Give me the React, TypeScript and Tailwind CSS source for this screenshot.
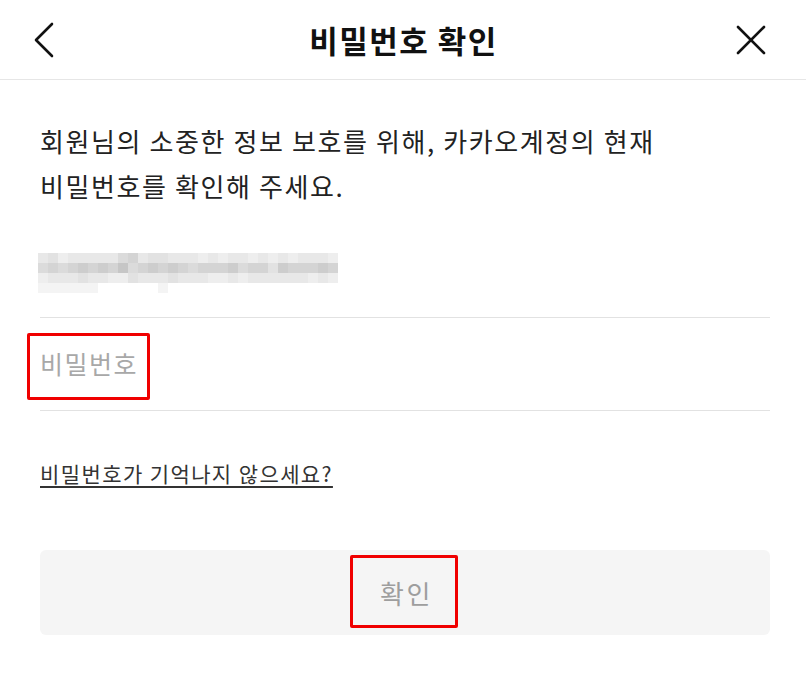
import React from "react";

// shade digits for the blurred e-mail mosaic (0 = white, 9 = darkest)
const mosaic: string[] = [
  "342333335634433323233232323332",
  "565676768567676566675664766676",
  "233343322433343332232333333232",
  "111111000000100000000000000000",
];

const shades = [
  "#ffffff",
  "#f4f4f4",
  "#eeeeee",
  "#e8e8e8",
  "#e2e2e2",
  "#dbdbdb",
  "#d4d4d4",
  "#cdcdcd",
  "#c6c6c6",
  "#bebebe",
];

const font = {
  fontFamily: '"Noto Sans CJK KR", "Noto Sans", sans-serif',
};

const BlurredEmail: React.FC = () => (
  <div className="flex flex-col">
    {mosaic.map((row, r) => (
      <div key={r} className="flex">
        {row.split("").map((d, c) => (
          <div
            key={c}
            className="h-[10px] w-[10px]"
            style={{ backgroundColor: shades[Number(d)] }}
          />
        ))}
      </div>
    ))}
  </div>
);

export default function App() {
  return (
    <div className="min-h-[682px] w-[806px] bg-white text-[#111]" style={font}>
      {/* === Header ======================================================= */}
      <header className="flex h-20 items-center justify-between border-b border-[#e6e6e6] pl-[33px] pr-[40px]">
        <button className="flex h-10 w-12 items-center justify-start">
          <svg width="22" height="36" viewBox="0 0 22 36" fill="none">
            <path
              d="M19 2 L3 18 L19 34"
              stroke="#111"
              strokeWidth="2.6"
              strokeLinecap="round"
              strokeLinejoin="round"
            />
          </svg>
        </button>
        <h1 className="text-[31px] font-bold leading-none tracking-[1.5px]">
          비밀번호 확인
        </h1>
        <button className="flex h-10 w-10 items-center justify-end">
          <svg width="30" height="30" viewBox="0 0 30 30" fill="none">
            <path
              d="M2 2 L28 28 M28 2 L2 28"
              stroke="#111"
              strokeWidth="2.6"
              strokeLinecap="round"
            />
          </svg>
        </button>
      </header>

      {/* === Body ========================================================= */}
      <main className="pl-10 pr-[36px]">
        <p className="mt-[38px] text-[26px] leading-[45px] tracking-[1.6px] text-[#222]">
          회원님의 소중한 정보 보호를 위해, 카카오계정의 현재
          <br />
          비밀번호를 확인해 주세요.
        </p>

        <div className="mt-[17px] flex h-[93px] items-center border-b border-[#e2e2e2]">
          <div className="-ml-[2px] mt-[4px]">
            <BlurredEmail />
          </div>
        </div>

        <div className="relative flex h-[93px] items-center border-b border-[#e2e2e2]">
          <input
            type="password"
            placeholder="비밀번호"
            className="w-full bg-transparent text-[25px] tracking-[1.5px] outline-none placeholder:text-[#a8a8a8]"
            style={font}
          />
          <div className="pointer-events-none absolute left-[-13px] top-[15px] h-[67px] w-[123px] rounded-[2px] border-[3px] border-[#f00000]" />
        </div>

        <a
          href="#"
          className="mt-[47px] inline-block text-[21px] leading-[30px] tracking-[1.4px] text-[#333] underline underline-offset-[4px]"
        >
          비밀번호가 기억나지 않으세요?
        </a>

        <div className="relative mt-[62px] flex h-[85px] items-center justify-center rounded-[6px] bg-[#f5f5f5]">
          <span className="pl-[3px] text-[26px] tracking-[2.5px] text-[#9e9e9e]">확인</span>
          <div className="pointer-events-none absolute left-[310px] top-[5px] h-[73px] w-[108px] rounded-[2px] border-[3px] border-[#f00000]" />
        </div>
      </main>
    </div>
  );
}
